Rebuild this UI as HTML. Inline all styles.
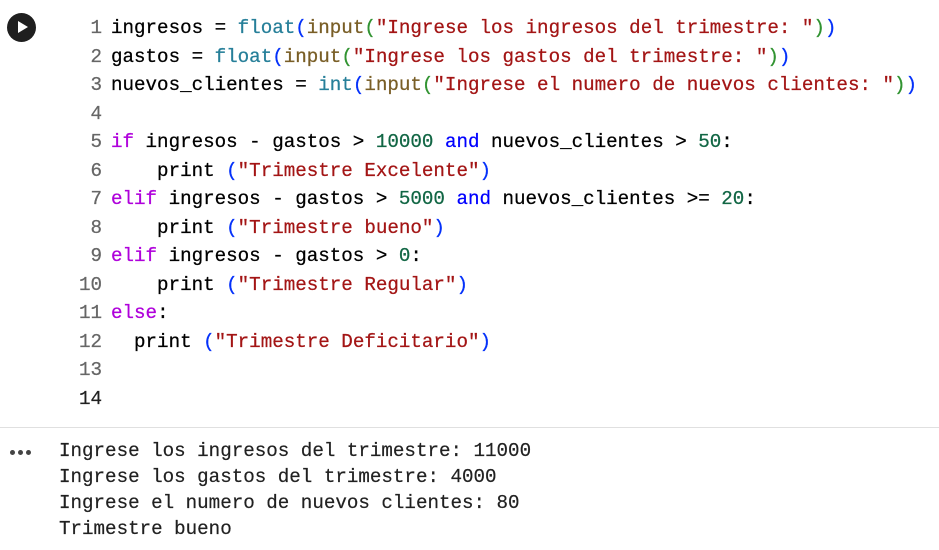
<html><head><style>
body{margin:0;width:939px;height:550px;background:#fff;overflow:hidden;position:relative;font-family:"Liberation Mono",monospace;font-size:19.2px;color:#000}
.code{position:absolute;top:14px;left:0;line-height:28.5px;white-space:pre;-webkit-text-stroke:0.25px}
.ln{display:inline-block;width:102px;text-align:right;color:#666;margin-right:9px}
.k{color:#af00db}.a{color:#0000ff}.b{color:#267f99}.f{color:#795e26}.s{color:#a31515}.n{color:#116644}
.p1{color:#0431fa}.p2{color:#319331}
.out{position:absolute;top:438px;left:59px;line-height:26px;white-space:pre;color:#212121;-webkit-text-stroke:0.2px}
.sep{position:absolute;top:427px;left:0;width:939px;height:1px;background:#e0e0e0}
.play{position:absolute;left:7px;top:13px;width:29px;height:29px;border-radius:50%;background:#1f1f1f}
.play:after{content:"";position:absolute;left:11px;top:8px;border-left:10px solid #fff;border-top:6.5px solid transparent;border-bottom:6.5px solid transparent}
.dot{position:absolute;top:450px;width:5px;height:5px;border-radius:50%;background:#444}
</style></head><body>
<div class="play"></div>
<div class="code"><span class="ln">1</span>ingresos = <span class="b">float</span><span class="p1">(</span><span class="f">input</span><span class="p2">(</span><span class="s">"Ingrese los ingresos del trimestre: "</span><span class="p2">)</span><span class="p1">)</span>
<span class="ln">2</span>gastos = <span class="b">float</span><span class="p1">(</span><span class="f">input</span><span class="p2">(</span><span class="s">"Ingrese los gastos del trimestre: "</span><span class="p2">)</span><span class="p1">)</span>
<span class="ln">3</span>nuevos_clientes = <span class="b">int</span><span class="p1">(</span><span class="f">input</span><span class="p2">(</span><span class="s">"Ingrese el numero de nuevos clientes: "</span><span class="p2">)</span><span class="p1">)</span>
<span class="ln">4</span>
<span class="ln">5</span><span class="k">if</span> ingresos - gastos &gt; <span class="n">10000</span> <span class="a">and</span> nuevos_clientes &gt; <span class="n">50</span>:
<span class="ln">6</span>    print <span class="p1">(</span><span class="s">"Trimestre Excelente"</span><span class="p1">)</span>
<span class="ln">7</span><span class="k">elif</span> ingresos - gastos &gt; <span class="n">5000</span> <span class="a">and</span> nuevos_clientes &gt;= <span class="n">20</span>:
<span class="ln">8</span>    print <span class="p1">(</span><span class="s">"Trimestre bueno"</span><span class="p1">)</span>
<span class="ln">9</span><span class="k">elif</span> ingresos - gastos &gt; <span class="n">0</span>:
<span class="ln">10</span>    print <span class="p1">(</span><span class="s">"Trimestre Regular"</span><span class="p1">)</span>
<span class="ln">11</span><span class="k">else</span>:
<span class="ln">12</span>  print <span class="p1">(</span><span class="s">"Trimestre Deficitario"</span><span class="p1">)</span>
<span class="ln">13</span>
<span class="ln" style="color:#212121">14</span></div>
<div class="sep"></div>
<div class="dot" style="left:10px"></div><div class="dot" style="left:18px"></div><div class="dot" style="left:26px"></div>
<div class="out">Ingrese los ingresos del trimestre: 11000
Ingrese los gastos del trimestre: 4000
Ingrese el numero de nuevos clientes: 80
Trimestre bueno</div>
</body></html>
